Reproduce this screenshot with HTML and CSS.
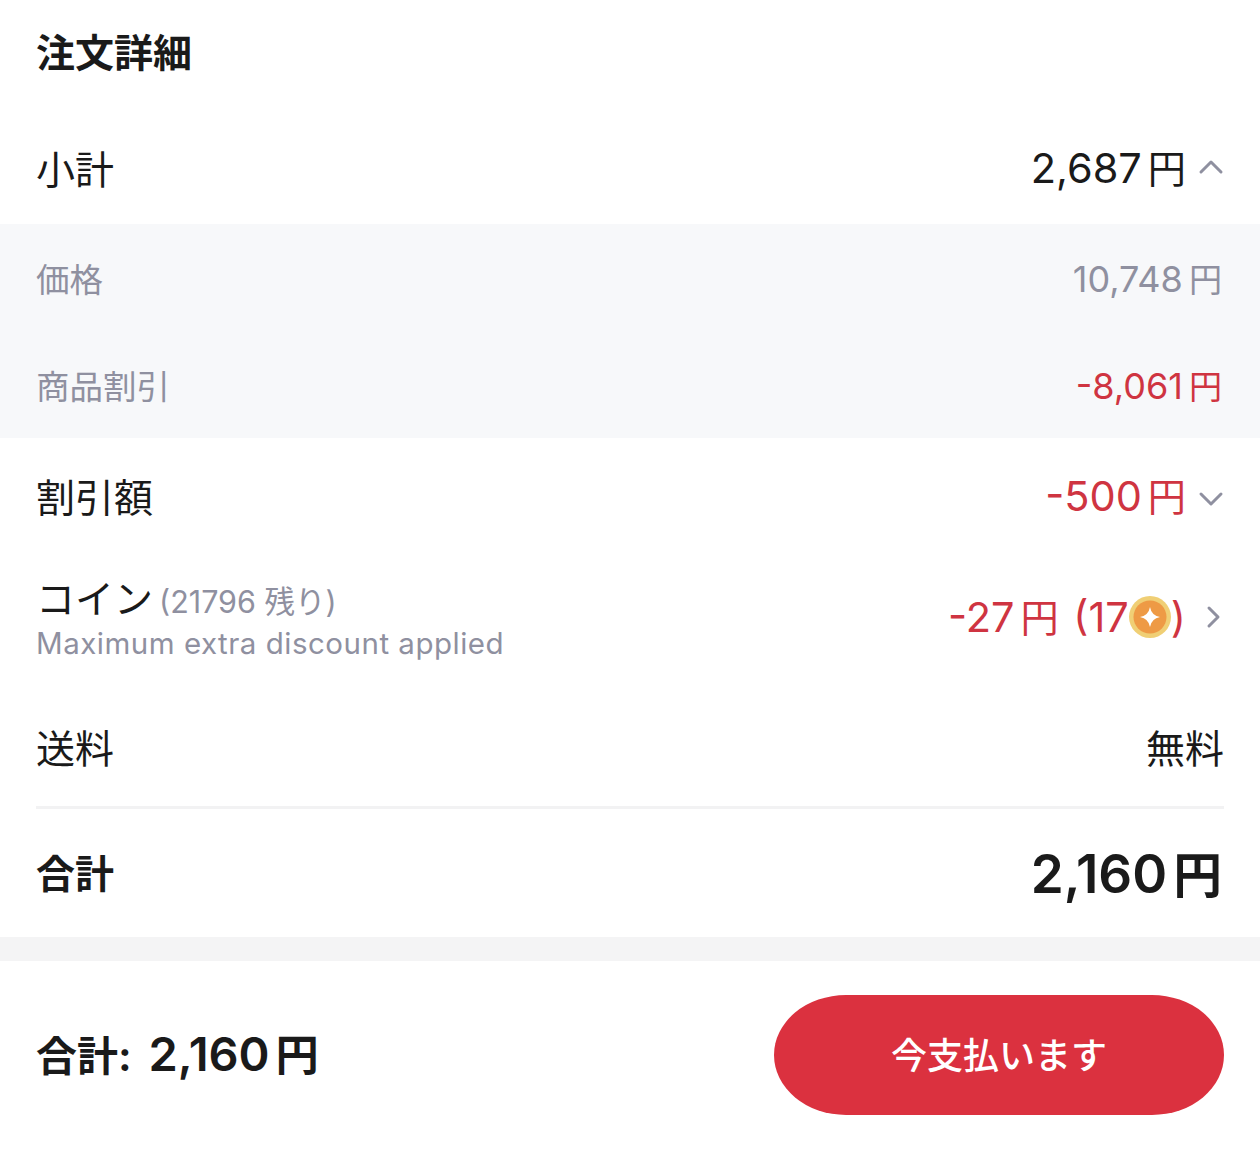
FILE: index.html
```html
<!DOCTYPE html>
<html lang="ja">
<head>
	<meta charset="UTF-8">
	<title>注文詳細</title>
	<link rel="stylesheet" href="styles.css">
</head>
<body>
	<div class="detail">
		<h2 class="title">注文詳細</h2>
		<div class="row row-sub">
			<span>小計</span>
			<span class="value">
				<span class="amt">2,687<i>円</i></span>
				<svg class="arrow" viewBox="0 0 28 28"><path d="M4 19 L14 9 L24 19"/></svg>
			</span>
		</div>
		<div class="extra">
			<div class="extra-row"><span>価格</span><span class="extra-amt">10,748<i>円</i></span></div>
			<div class="extra-row"><span>商品割引</span><span class="extra-amt red">-8,061<i>円</i></span></div>
		</div>
		<div class="row row-discount">
			<span>割引額</span>
			<span class="value red">
				<span class="amt">-500<i>円</i></span>
				<svg class="arrow" viewBox="0 0 28 28"><path d="M4 13 L14 23 L24 13"/></svg>
			</span>
		</div>
		<div class="row row-coin">
			<div class="coin-info">
				<div class="coin-name">コイン<small>(21796 残り)</small></div>
				<div class="coin-note">Maximum extra discount applied</div>
			</div>
			<span class="value red">
				<span class="amt">-27<i>円</i> <span class="coin-count">(17<svg class="coin" viewBox="0 0 42 42"><circle cx="21" cy="21" r="21" fill="#f0cf75"/><circle cx="21" cy="21" r="16.5" fill="#ee9a45"/><path d="M21 11 Q22.500 19.500 31 21 Q22.500 22.500 21 31 Q19.500 22.500 11 21 Q19.500 19.500 21 11Z" fill="#fff"/></svg>)</span></span>
				<svg class="arrow arrow-right" viewBox="0 0 28 28"><path d="M10 6 L19 15 L10 24"/></svg>
			</span>
		</div>
		<div class="row row-ship">
			<span>送料</span>
			<span class="value">無料</span>
		</div>
		<div class="row row-total">
			<span>合計</span>
			<span class="total-num">2,160<i>円</i></span>
		</div>
	</div>
	<div class="gap"></div>
	<div class="footer">
		<div class="pay-sum"><span class="pay-label">合計:</span> 2,160<i>円</i></div>
		<a href="javascript:;" class="pay-btn">今支払います</a>
	</div>
</body>
</html>
```

FILE: styles.css
```css
*{
	box-sizing: border-box;
}

body{
	margin: 0;
	background: #fff;
	color: #1a1a1a;
	font-family: Inter, "Noto Sans CJK JP", sans-serif;
}

i{
	font-style: normal;
	font-size: .92em;
	margin-left: 6px;
}

.red{
	color: #cf3441;
}

.title{
	margin: 0;
	height: 114px;
	padding: 27px 36px 0;
	font-size: 39px;
	line-height: 52px;
	font-weight: 700;
}

.row{
	display: flex;
	justify-content: space-between;
	align-items: center;
	padding: 0 36px 5px;
	font-size: 39px;
}

.value{
	display: flex;
	align-items: center;
}

.amt{
	padding-top: 4px;
	font-size: 41.5px;
	line-height: 52px;
}

.arrow{
	width: 28px;
	height: 28px;
	margin-left: 11px;
	margin-right: -1px;
	fill: none;
	stroke: #8f90a0;
	stroke-width: 3;
	stroke-linecap: round;
	stroke-linejoin: round;
}

.arrow-right{
	margin-left: 13px;
	margin-right: -3px;
}

.row-sub{
	height: 110px;
}

.extra{
	background: #f7f8fa;
	color: #8f90a0;
	font-size: 33.5px;
}

.extra-row{
	display: flex;
	justify-content: space-between;
	align-items: center;
	height: 107px;
	padding: 0 36px;
}

.extra-amt{
	margin-right: 2px;
	padding-top: 4px;
	font-size: 36px;
	line-height: 44px;
}

.row-discount{
	height: 118px;
}

.row-coin{
	height: 124px;
}

.coin-info{
	padding-top: 6px;
}

.coin-name{
	line-height: 44px;
}

.coin-name small{
	margin-left: 6px;
	font-size: 30.5px;
	color: #8f90a0;
}

.coin-note{
	margin-top: 1px;
	font-size: 29.5px;
	line-height: 36px;
	letter-spacing: .5px;
	color: #8f90a0;
}

.coin-count{
	margin-left: 3px;
}

.coin{
	width: 42px;
	height: 42px;
	vertical-align: -6px;
}

.row-ship{
	height: 126px;
	padding-top: 10px;
}

.row-total{
	height: 131px;
	margin: 0 36px;
	padding: 0 0 5px;
	border-top: 3px solid #f2f2f3;
	font-weight: 700;
}

.total-num{
	margin-right: 2px;
	padding-top: 8px;
	font-size: 53px;
	font-weight: 600;
	line-height: 64px;
}

.gap{
	height: 24px;
	background: #f4f4f5;
}

.footer{
	display: flex;
	justify-content: space-between;
	align-items: center;
	height: 188px;
	padding: 0 36px;
}

.pay-sum{
	font-size: 47px;
	font-weight: 600;
	line-height: 56px;
}

.pay-label{
	margin-right: 5px;
	font-size: 41px;
	font-weight: 700;
}

.pay-btn{
	display: block;
	width: 450px;
	height: 120px;
	border-radius: 72px / 60px;
	background: #db313f;
	color: #fff;
	text-align: center;
	text-decoration: none;
	font-size: 36px;
	font-weight: 500;
	line-height: 122px;
}
```
